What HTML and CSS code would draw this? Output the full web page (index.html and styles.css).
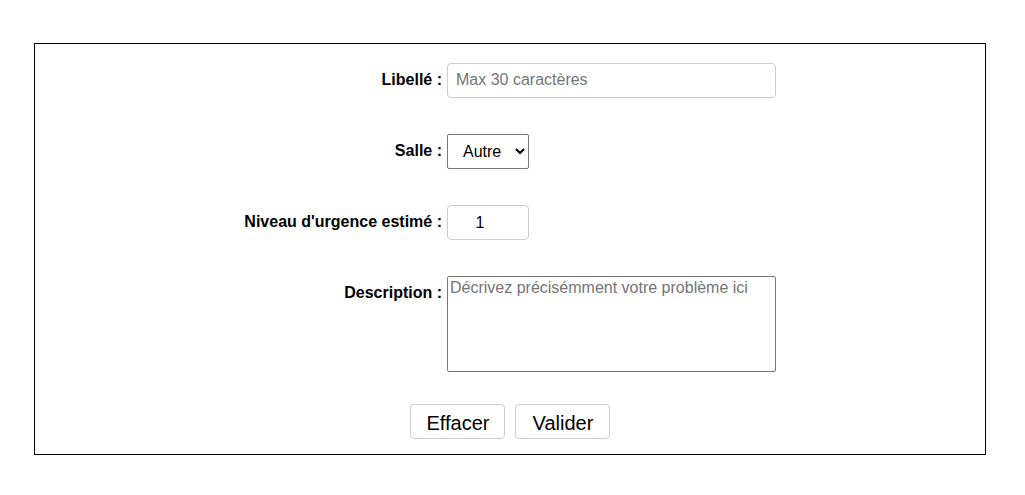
FILE: index.html
```html
<!DOCTYPE html>
<html lang="fr">
<head>
<meta charset="utf-8">
<title>Signalement</title>
<link rel="stylesheet" href="styles.css">
</head>
<body>
<form class="panel">
  <div class="fields">
    <label class="lbl" for="libelle">Libellé :</label>
    <input class="txt" id="libelle" type="text" placeholder="Max 30 caractères">

    <label class="lbl" for="salle">Salle :</label>
    <div class="ctl"><select class="sel" id="salle"><option>Autre</option></select></div>

    <label class="lbl" for="niveau">Niveau d'urgence estimé :</label>
    <div class="ctl"><input class="num" id="niveau" type="text" value="1"></div>

    <label class="lbl lbl-top" for="desc">Description :</label>
    <textarea class="area" id="desc" placeholder="Décrivez précisémment votre problème ici"></textarea>
  </div>
  <div class="actions">
    <button type="reset" class="btn">Effacer</button>
    <button type="submit" class="btn">Valider</button>
  </div>
</form>
</body>
</html>
```

FILE: styles.css
```css
html, body {
  margin: 0;
  padding: 0;
  background: #fff;
}
body {
  font-family: "Liberation Sans", Arial, sans-serif;
  color: #000;
  padding: 43px 39px 0 34px;
}
.panel {
  border: 1px solid #000;
  padding: 19px 0 15px 0;
  box-sizing: border-box;
  height: 412px;
}
.fields {
  display: grid;
  grid-template-columns: 407px 329px;
  grid-auto-rows: auto;
  column-gap: 5px;
  row-gap: 36px;
  align-items: center;
}
.lbl {
  font-weight: bold;
  font-size: 16px;
  text-align: right;
  line-height: 18px;
  padding-bottom: 2px;
}
.lbl-top {
  align-self: start;
  padding-top: 8px;
  padding-bottom: 0;
}
.ctl {
  display: flex;
}
.txt {
  box-sizing: border-box;
  width: 329px;
  height: 35px;
  border: 1px solid #ccc;
  border-radius: 4px;
  padding: 0 8px 2px 8px;
  font-family: "Liberation Sans", Arial, sans-serif;
  font-size: 16px;
  margin: 0;
}
.txt::placeholder, .area::placeholder {
  color: #757575;
}
.sel {
  box-sizing: border-box;
  width: 82px;
  height: 35px;
  border: 1px solid #767676;
  border-radius: 2px;
  padding: 0 4px 0 11px;
  font-family: "Liberation Sans", Arial, sans-serif;
  font-size: 16px;
  background: #fff;
  color: #000;
  margin: 0;
}
.num {
  box-sizing: border-box;
  width: 82px;
  height: 35px;
  border: 1px solid #ccc;
  border-radius: 4px;
  text-align: center;
  font-family: "Liberation Sans", Arial, sans-serif;
  font-size: 16px;
  padding: 0 16px 0 0;
  margin: 0;
}
.area {
  box-sizing: border-box;
  width: 329px;
  height: 96px;
  border: 1px solid #767676;
  border-radius: 2px;
  padding: 2px;
  font-family: "Liberation Sans", Arial, sans-serif;
  font-size: 16px;
  resize: none;
  margin: 0;
}
.actions {
  display: flex;
  justify-content: center;
  gap: 10px;
  margin-top: 32px;
}
.btn {
  box-sizing: border-box;
  height: 35px;
  width: 95px;
  padding: 3px 0 0 1px;
  border: 1px solid #ccc;
  border-radius: 4px;
  background: #fff;
  font-family: "Liberation Sans", Arial, sans-serif;
  font-size: 20px;
  color: #000;
}
```
